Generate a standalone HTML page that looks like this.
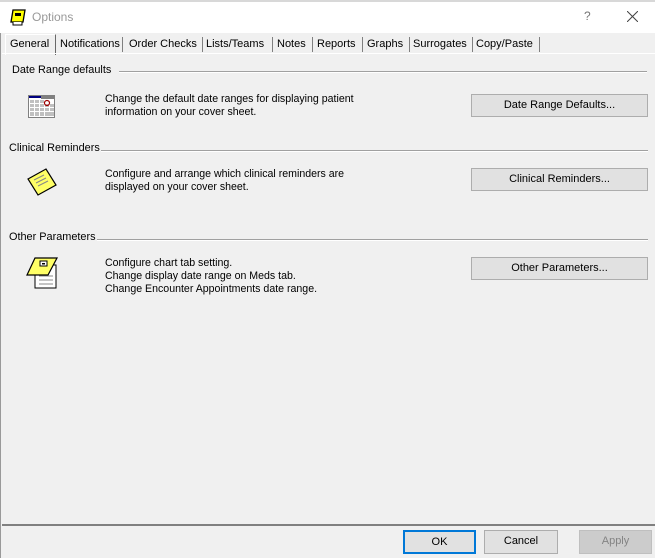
<!DOCTYPE html>
<html><head><style>
body{margin:0;width:655px;height:558px;background:#f0f0f0;font-family:"Liberation Sans",Arial,sans-serif;font-size:10.6px;color:#000;position:relative;overflow:hidden}
.a{position:absolute;white-space:nowrap}
.title{left:0;top:0;width:655px;height:33px;background:#fff}
.tab{top:37px;height:15px;line-height:15px;font-size:11px;border-right:1px solid #808080;padding-left:3px}
.hdr{font-size:10.9px}
.line{height:0;border-top:1px solid #a0a0a0;border-bottom:1px solid #fff}
.btn{background:#e1e1e1;border:1px solid #adadad;text-align:center;line-height:21px;font-size:11px;box-sizing:border-box}
</style></head><body>
<div class="a" style="left:0;top:0;width:1px;height:558px;background:#999"></div>
<div class="a title"></div>
<div class="a" style="left:0;top:0;width:655px;height:2px;background:#d8d8d8"></div>
<svg class="a" style="left:10px;top:8px" width="18" height="18" viewBox="0 0 18 18"><path d="M3 2h12l-2 12H1z" fill="#ffff00" stroke="#000" stroke-width="1.3"/><rect x="5" y="5" width="6" height="3" fill="#000"/><path d="M3 14v3h9v-3" fill="#fff" stroke="#000"/></svg>
<div class="a" style="left:32px;top:10px;font-size:12px;color:#999">Options</div>
<div class="a" style="left:584px;top:9px;font-size:12px;color:#777">?</div>
<svg class="a" style="left:627px;top:11px" width="11" height="11"><path d="M0 0L11 11M11 0L0 11" stroke="#444" stroke-width="1"/></svg>

<div class="a" style="left:5px;top:34px;width:49px;height:20px;border-left:1px solid #fff;border-top:1px solid #fff;border-right:1px solid #696969"></div>
<div class="a" style="left:10px;top:38px;font-size:11px">General</div>
<div class="a tab" style="left:57px;width:62px">Notifications</div>
<div class="a tab" style="left:126px;width:73px">Order Checks</div>
<div class="a tab" style="left:203px;width:66px">Lists/Teams</div>
<div class="a tab" style="left:274px;width:35px">Notes</div>
<div class="a tab" style="left:314px;width:45px">Reports</div>
<div class="a tab" style="left:364px;width:42px">Graphs</div>
<div class="a tab" style="left:410px;width:59px">Surrogates</div>
<div class="a tab" style="left:473px;width:63px">Copy/Paste</div>
<div class="a" style="left:2px;top:53px;width:653px;border-top:1px solid #fff"></div>

<div class="a hdr" style="left:12px;top:64px">Date Range defaults</div>
<div class="a line" style="left:119px;top:71px;width:528px"></div>
<svg class="a" style="left:28px;top:95px" width="28" height="24"><rect x="0.5" y="0.5" width="26" height="22" fill="#fff" stroke="#808080"/><rect x="1" y="1" width="12" height="2" fill="#000080"/><rect x="13" y="1" width="13" height="3" fill="#808080"/><g fill="#c0c0c0"><rect x="2" y="5" width="4" height="3"/><rect x="7" y="5" width="4" height="3"/><rect x="12" y="5" width="4" height="3"/><rect x="2" y="9" width="4" height="3"/><rect x="7" y="9" width="4" height="3"/><rect x="12" y="9" width="4" height="3"/><rect x="17" y="9" width="4" height="3"/><rect x="22" y="9" width="4" height="3"/><rect x="2" y="13" width="4" height="3"/><rect x="7" y="13" width="4" height="3"/><rect x="12" y="13" width="4" height="3"/><rect x="17" y="13" width="4" height="3"/><rect x="22" y="13" width="4" height="3"/><rect x="2" y="17" width="4" height="4"/><rect x="7" y="17" width="4" height="4"/><rect x="12" y="17" width="4" height="4"/><rect x="17" y="17" width="9" height="4"/></g><circle cx="19" cy="8" r="2.5" fill="none" stroke="#a00000" stroke-width="1.2"/></svg>
<div class="a" style="left:105px;top:93px;line-height:13px">Change the default date ranges for displaying patient<br>information on your cover sheet.</div>
<div class="a btn" style="left:471px;top:94px;width:177px;height:23px">Date Range Defaults...</div>

<div class="a hdr" style="left:9px;top:142px">Clinical Reminders</div>
<div class="a line" style="left:101px;top:150px;width:547px"></div>
<svg class="a" style="left:26px;top:167px" width="32" height="30"><path d="M2 12L20 2L30 18L12 28z" fill="#ffff66" stroke="#000" stroke-width="1.2"/><path d="M8 13l10-5M10 16l10-5M12 19l10-5" stroke="#888" stroke-width="1"/></svg>
<div class="a" style="left:105px;top:168px;line-height:13px">Configure and arrange which clinical reminders are<br>displayed on your cover sheet.</div>
<div class="a btn" style="left:471px;top:168px;width:177px;height:23px">Clinical Reminders...</div>

<div class="a hdr" style="left:9px;top:231px">Other Parameters</div>
<div class="a line" style="left:97px;top:239px;width:551px"></div>
<svg class="a" style="left:26px;top:256px" width="34" height="34"><rect x="9" y="9" width="21" height="23" fill="#fff" stroke="#000"/><path d="M13 20h14M13 24h14M13 28h14" stroke="#888"/><path d="M9 2h22l-9 17H1z" fill="#ffff66" stroke="#000" stroke-width="1.2"/><rect x="14" y="5" width="7" height="5" fill="#fff" stroke="#000"/><rect x="16" y="7" width="3" height="1.5" fill="#000"/></svg>
<div class="a" style="left:105px;top:257px;line-height:13px">Configure chart tab setting.<br>Change display date range on Meds tab.<br>Change Encounter Appointments date range.</div>
<div class="a btn" style="left:471px;top:257px;width:177px;height:23px">Other Parameters...</div>

<div class="a" style="left:2px;top:524px;width:653px;border-top:2px solid #808080"></div>
<div class="a btn" style="left:403px;top:530px;width:73px;height:24px;border:2px solid #0078d7;line-height:20px">OK</div>
<div class="a btn" style="left:484px;top:530px;width:74px;height:24px">Cancel</div>
<div class="a btn" style="left:579px;top:530px;width:73px;height:24px;background:#ccc;border-color:#bfbfbf;color:#838383">Apply</div>
</body></html>
